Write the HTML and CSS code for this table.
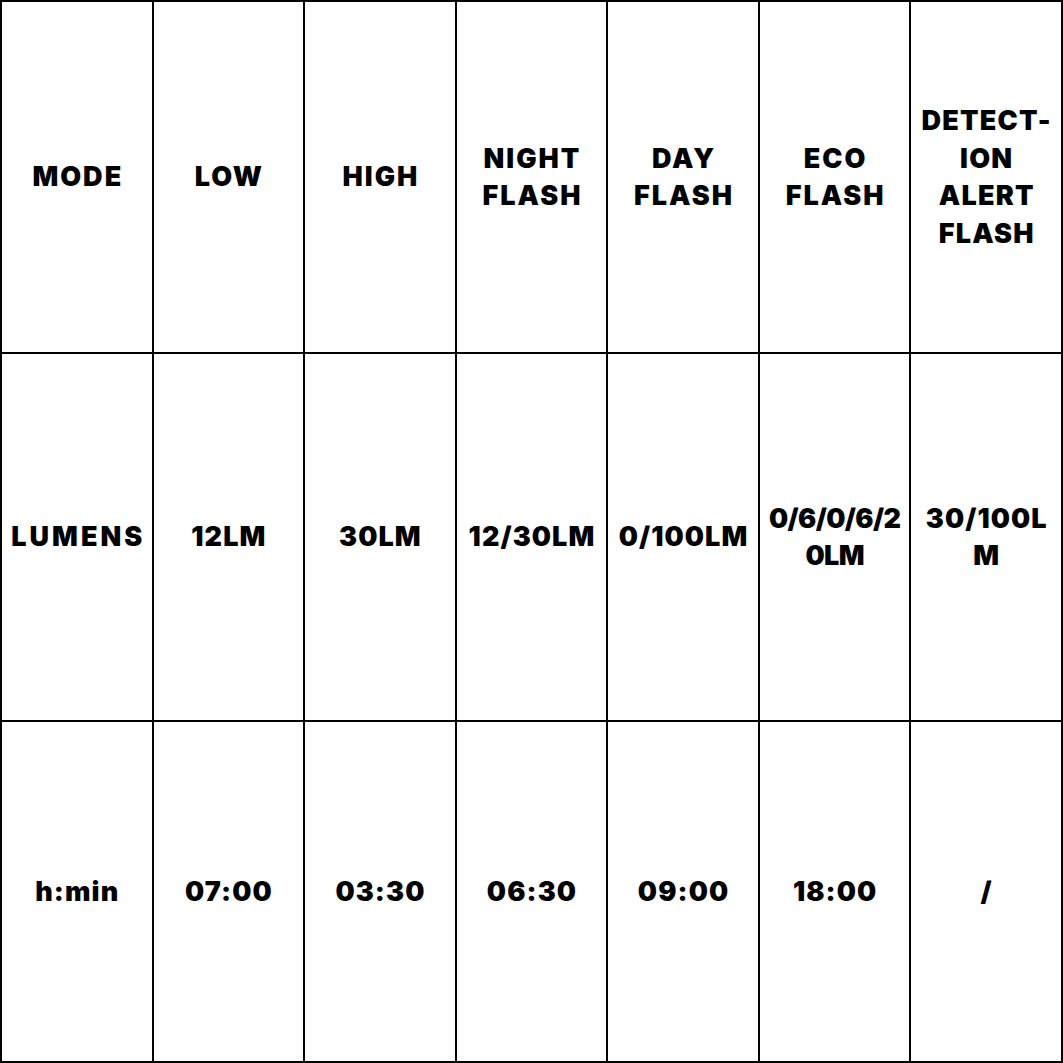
FILE: index.html
```html
<!DOCTYPE html>
<html>
<head>
<meta charset="utf-8">
<link rel="stylesheet" href="styles.css">
</head>
<body>
<div class="grid">
  <div class="cell word">MODE</div>
  <div class="cell word">LOW</div>
  <div class="cell word">HIGH</div>
  <div class="cell word">NIGHT FLASH</div>
  <div class="cell word">DAY FLASH</div>
  <div class="cell word">ECO FLASH</div>
  <div class="cell word tight">DETECT-ION ALERT FLASH</div>
  <div class="cell word wide">LUMENS</div>
  <div class="cell num">12LM</div>
  <div class="cell num">30LM</div>
  <div class="cell num">12/30LM</div>
  <div class="cell num">0/100LM</div>
  <div class="cell num slim">0/6/0/6/2<br>0LM</div>
  <div class="cell num">30/100L<br>M</div>
  <div class="cell num">h:min</div>
  <div class="cell num">07:00</div>
  <div class="cell num">03:30</div>
  <div class="cell num">06:30</div>
  <div class="cell num">09:00</div>
  <div class="cell num">18:00</div>
  <div class="cell num">/</div>
</div>
</body>
</html>
```
FILE: styles.css
```css
html, body {
  margin: 0;
  padding: 0;
  background: #fff;
}
.grid {
  width: 1063px;
  height: 1063px;
  box-sizing: border-box;
  display: grid;
  grid-template-columns: repeat(7, minmax(0, 1fr));
  grid-template-rows: 350px 366px 339px;
  gap: 2px;
  padding: 2px;
  background: #000;
}
.cell {
  background: #fff;
  display: flex;
  align-items: center;
  justify-content: center;
  text-align: center;
  padding: 0;
  min-width: 0;
  font-family: Inter, "Liberation Sans", sans-serif;
  font-weight: 900;
  font-size: 27px;
  line-height: 37.5px;
  color: #000;
}
.word {
  letter-spacing: 2px;
  padding-left: 2px;
}
.tight {
  letter-spacing: 1.2px;
  padding-left: 1px;
}
.wide {
  letter-spacing: 3px;
  padding-left: 3px;
}
.num {
  letter-spacing: 1.1px;
  padding-left: 1px;
}
.slim {
  letter-spacing: -0.6px;
  padding-left: 0;
}
```
